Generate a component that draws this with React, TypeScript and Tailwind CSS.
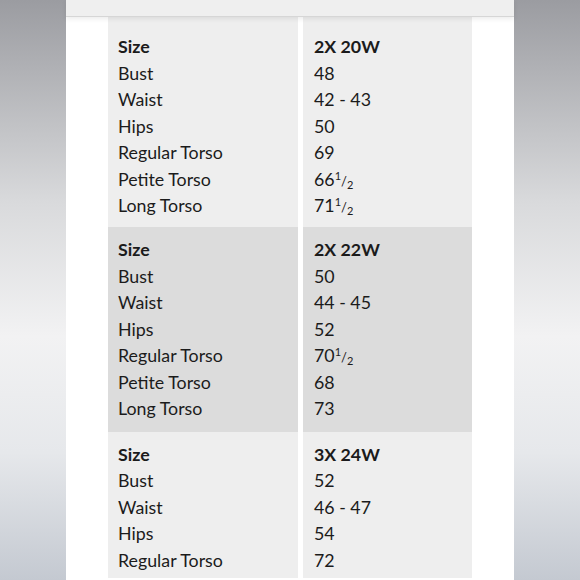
const groups = [
  {
    size: "2X 20W",
    bg: "bg-[#eeeeee]",
    pad: "pt-[16px] pb-[8.5px]",
    rows: [
      ["Bust", "48"],
      ["Waist", "42 - 43"],
      ["Hips", "50"],
      ["Regular Torso", "69"],
      ["Petite Torso", "66|"],
      ["Long Torso", "71|"],
    ],
  },
  {
    size: "2X 22W",
    bg: "bg-[#dcdcdc]",
    pad: "pt-[9px] pb-[10px]",
    rows: [
      ["Bust", "50"],
      ["Waist", "44 - 45"],
      ["Hips", "52"],
      ["Regular Torso", "70|"],
      ["Petite Torso", "68"],
      ["Long Torso", "73"],
    ],
  },
  {
    size: "3X 24W",
    bg: "bg-[#eeeeee]",
    pad: "pt-[9px] pb-[5px]",
    rows: [
      ["Bust", "52"],
      ["Waist", "46 - 47"],
      ["Hips", "54"],
      ["Regular Torso", "72"],
    ],
  },
];

function Value({ v }: { v: string }) {
  // "|" marks a trailing one-half
  if (v.endsWith("|")) {
    return (
      <span>
        {v.slice(0, -1)}
        <span className="relative -top-[6px] text-[11px]">1</span>
        <span className="text-[13px]">/</span>
        <span className="relative top-[3px] text-[11px]">2</span>
      </span>
    );
  }
  return <span>{v}</span>;
}

export default function App() {
  return (
    <div className="w-[580px] h-[580px] overflow-hidden flex justify-center bg-[linear-gradient(180deg,#9b9ca1_0%,#d9dadc_35%,#f2f2f3_58%,#e6e8eb_78%,#c4c9d1_100%)]">
      <div className="w-[448px] h-full bg-white flex flex-col">
        <div className="h-[17px] shrink-0 bg-[#efefef] border-b border-[#d6d6d6] shadow-[0_2px_5px_rgba(0,0,0,0.08)] relative z-10" />
        <div className="px-[42px] flex flex-col text-[17.8px] text-[#1b1b1b] font-['Lato','Liberation_Sans',sans-serif]">
          {groups.map((g) => (
            <div key={g.size} className="flex gap-[5px]">
              <div className={`w-[190px] pl-[10px] ${g.bg} ${g.pad}`}>
                <div className="h-[26.5px] leading-[26.5px] font-bold">Size</div>
                {g.rows.map(([k]) => (
                  <div key={k} className="h-[26.5px] leading-[26.5px]">
                    {k}
                  </div>
                ))}
              </div>
              <div className={`w-[169px] pl-[11px] ${g.bg} ${g.pad}`}>
                <div className="h-[26.5px] leading-[26.5px] font-bold">{g.size}</div>
                {g.rows.map(([k, v]) => (
                  <div key={k} className="h-[26.5px] leading-[26.5px]">
                    <Value v={v} />
                  </div>
                ))}
              </div>
            </div>
          ))}
        </div>
      </div>
    </div>
  );
}
